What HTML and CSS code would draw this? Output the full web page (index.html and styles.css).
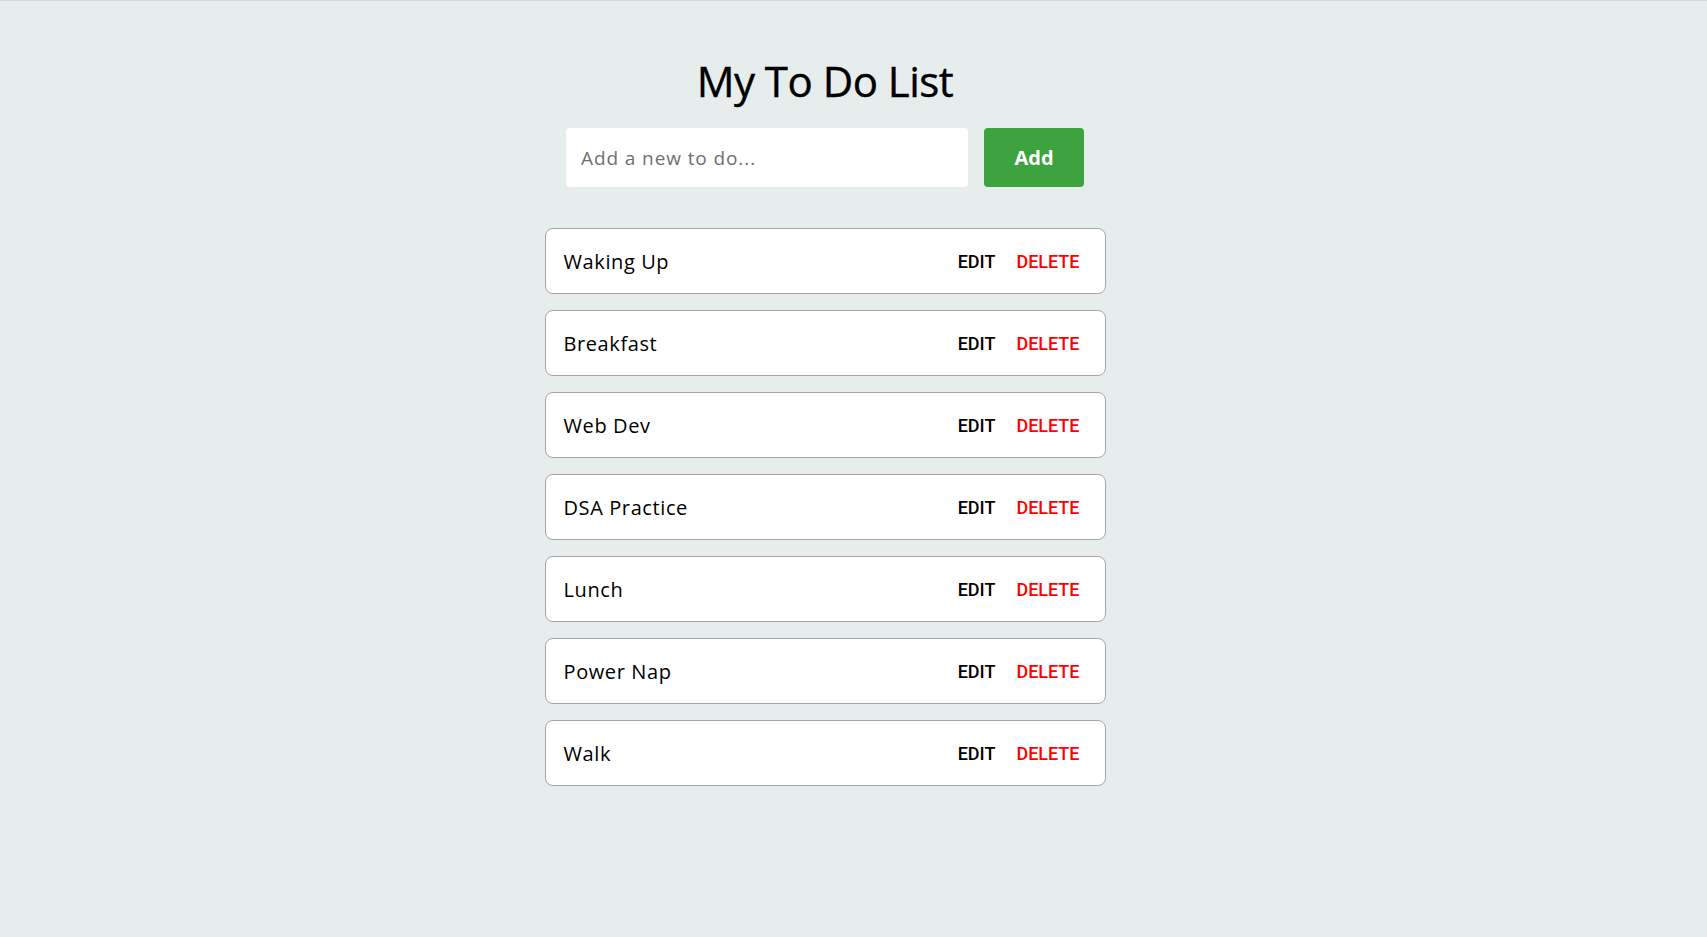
FILE: index.html
```html
<!DOCTYPE html>
<html lang="en">
<head>
<meta charset="utf-8">
<title>My To Do List</title>
<link rel="stylesheet" href="styles.css">
</head>
<body>
<div class="page">
  <main class="app">
    <h1 class="title">My To Do List</h1>
    <form class="add-form">
      <input class="add-input" type="text" placeholder="Add a new to do...">
      <button class="add-btn" type="button">Add</button>
    </form>
    <ul class="todo-list">
      <li class="todo"><span class="todo-text">Waking Up</span><span class="actions"><button class="edit">EDIT</button><button class="delete">DELETE</button></span></li>
      <li class="todo"><span class="todo-text">Breakfast</span><span class="actions"><button class="edit">EDIT</button><button class="delete">DELETE</button></span></li>
      <li class="todo"><span class="todo-text">Web Dev</span><span class="actions"><button class="edit">EDIT</button><button class="delete">DELETE</button></span></li>
      <li class="todo"><span class="todo-text">DSA Practice</span><span class="actions"><button class="edit">EDIT</button><button class="delete">DELETE</button></span></li>
      <li class="todo"><span class="todo-text">Lunch</span><span class="actions"><button class="edit">EDIT</button><button class="delete">DELETE</button></span></li>
      <li class="todo"><span class="todo-text">Power Nap</span><span class="actions"><button class="edit">EDIT</button><button class="delete">DELETE</button></span></li>
      <li class="todo"><span class="todo-text">Walk</span><span class="actions"><button class="edit">EDIT</button><button class="delete">DELETE</button></span></li>
    </ul>
  </main>
</div>
</body>
</html>
```

FILE: styles.css
```css
html, body {
  margin: 0;
  padding: 0;
}
body {
  background: #e7eded;
  border-top: 1px solid #d4d8d8;
  min-height: 936px;
  font-family: "Open Sans", "Noto Sans", sans-serif;
  color: #000;
}
.page {
  display: flex;
  justify-content: center;
  padding-right: 57px;
}
.app {
  width: 561px;
  display: flex;
  flex-direction: column;
  align-items: center;
}
.title {
  margin: 50px 0 0;
  font-size: 42px;
  font-weight: 500;
  line-height: 60px;
  letter-spacing: -0.5px;
  -webkit-text-stroke: 0.4px #000;
}
.add-form {
  display: flex;
  gap: 16px;
  margin-top: 17px;
}
.add-input {
  box-sizing: border-box;
  width: 402px;
  height: 59px;
  border: none;
  border-radius: 4px;
  background: #fff;
  padding: 0 15px;
  font-family: inherit;
  font-size: 19px;
  letter-spacing: 0.9px;
  color: #333;
  outline: none;
}
.add-input::placeholder {
  color: #707070;
}
.add-btn {
  width: 100px;
  height: 59px;
  border: none;
  border-radius: 4px;
  background: #3ca33e;
  color: #fff;
  font-family: inherit;
  font-size: 20px;
  font-weight: 700;
  cursor: pointer;
}
.todo-list {
  list-style: none;
  margin: 41px 0 0;
  padding: 0;
  width: 561px;
  display: flex;
  flex-direction: column;
  gap: 16px;
}
.todo {
  box-sizing: border-box;
  height: 66px;
  background: #fff;
  border: 1px solid #a6a6a6;
  border-radius: 8px;
  display: flex;
  align-items: center;
  justify-content: space-between;
  padding: 0 25px 0 18px;
}
.todo-text {
  font-size: 20px;
  letter-spacing: 0.6px;
}
.actions {
  display: flex;
  gap: 21px;
}
.actions button {
  border: none;
  background: none;
  padding: 0;
  font-family: Roboto, "Liberation Sans", sans-serif;
  font-size: 18px;
  font-weight: 500;
  cursor: pointer;
}
.edit {
  color: #000;
}
.delete {
  color: #ff0000;
}
```
